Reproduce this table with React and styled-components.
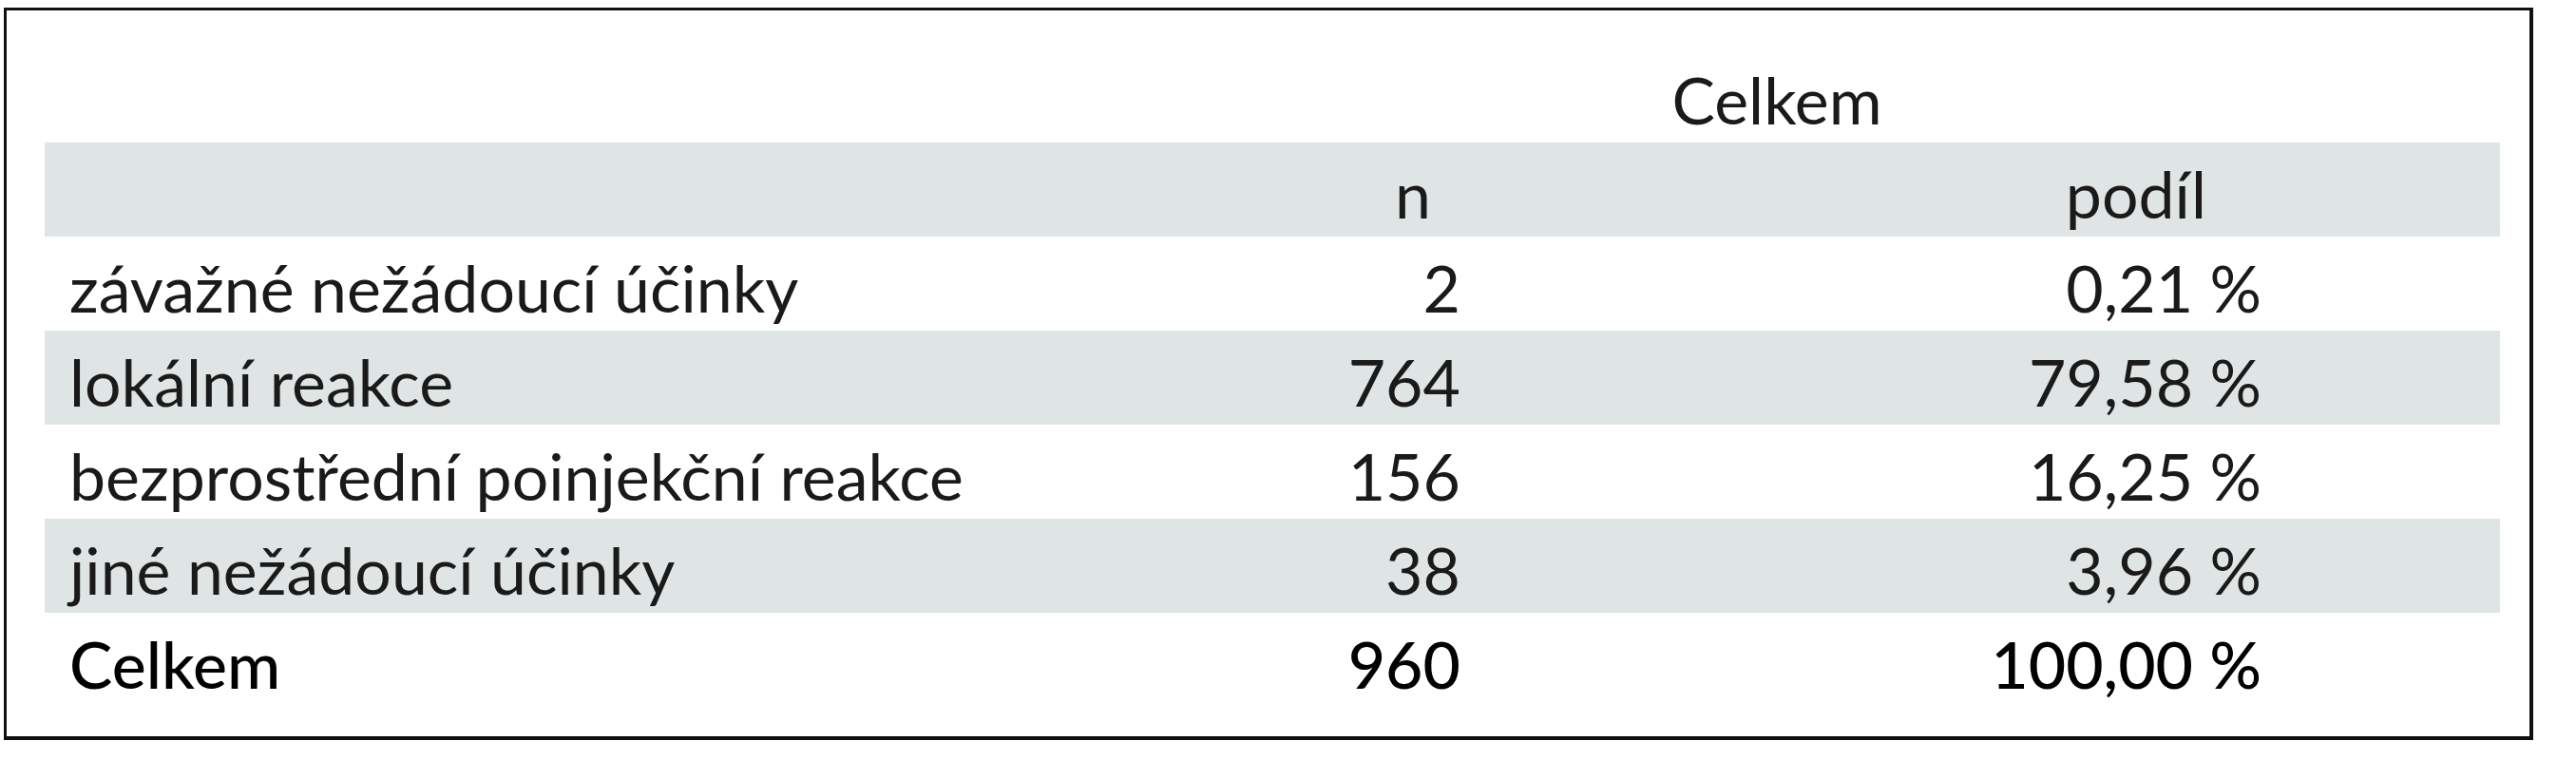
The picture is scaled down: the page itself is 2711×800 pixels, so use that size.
import React from 'react';
import styled, { createGlobalStyle } from 'styled-components';

const GlobalStyle = createGlobalStyle`
  html, body {
    margin: 0;
    padding: 0;
    background: #ffffff;
  }
`;

const Frame = styled.div`
  box-sizing: border-box;
  width: 2662px;
  margin: 8px 0 0 4px;
  padding: 40px 31px 31px 40px;
  border: 3px solid #111;
  border-right-width: 4px;
  border-bottom-width: 4px;
  background: #fff;
  font-family: Lato, 'Open Sans', sans-serif;
  color: #1a1a1a;
`;

const Table = styled.table`
  width: 2584px;
  table-layout: fixed;
  border-collapse: collapse;
  font-size: 68px;
`;

const Row = styled.tr`
  height: 99px;
  background: ${(p) => (p.$shaded ? '#dee5e4' : 'transparent')};
  font-weight: ${(p) => (p.$total ? 500 : 400)};
  color: ${(p) => (p.$total ? '#000' : 'inherit')};
`;

const Cell = styled.td`
  padding: 0;
  padding-top: 8px;
  line-height: 91px;
  white-space: nowrap;
  vertical-align: middle;
  text-align: ${(p) => p.$align || 'left'};
  padding-left: ${(p) => p.$pl || 0}px;
  padding-right: ${(p) => p.$pr || 0}px;
`;

const rows = [
  { label: 'závažné nežádoucí účinky', n: '2', share: '0,21 %' },
  { label: 'lokální reakce', n: '764', share: '79,58 %' },
  { label: 'bezprostřední poinjekční reakce', n: '156', share: '16,25 %' },
  { label: 'jiné nežádoucí účinky', n: '38', share: '3,96 %' },
];

export default function App() {
  return (
    <>
      <GlobalStyle />
      <Frame>
        <Table>
          <colgroup>
            <col style={{ width: 1062 }} />
            <col style={{ width: 756 }} />
            <col style={{ width: 766 }} />
          </colgroup>
          <tbody>
            <Row>
              <Cell />
              <Cell colSpan={2} $align="center">Celkem</Cell>
            </Row>
            <Row $shaded>
              <Cell />
              <Cell $align="center">n</Cell>
              <Cell $align="center">podíl</Cell>
            </Row>
            {rows.map((r, i) => (
              <Row key={r.label} $shaded={i % 2 === 1}>
                <Cell $pl={26}>{r.label}</Cell>
                <Cell $align="right" $pr={328}>{r.n}</Cell>
                <Cell $align="right" $pr={251}>{r.share}</Cell>
              </Row>
            ))}
            <Row $total>
              <Cell $pl={26}>Celkem</Cell>
              <Cell $align="right" $pr={328}>960</Cell>
              <Cell $align="right" $pr={251}>100,00 %</Cell>
            </Row>
          </tbody>
        </Table>
      </Frame>
    </>
  );
}
